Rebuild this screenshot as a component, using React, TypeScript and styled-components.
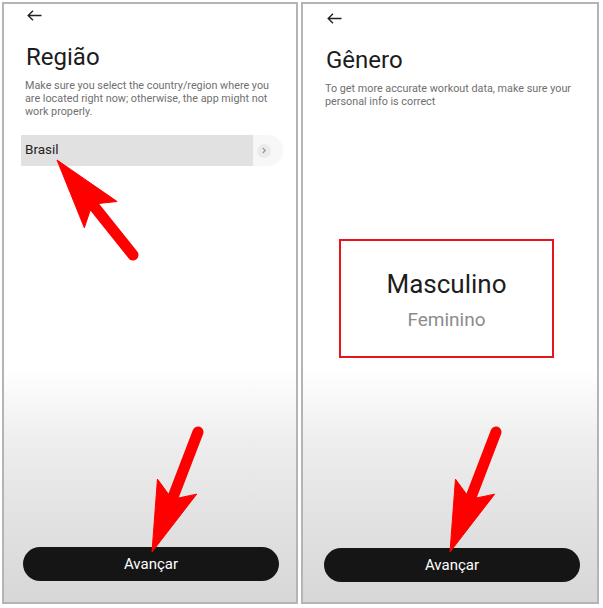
import React from "react";
import styled, { createGlobalStyle } from "styled-components";

const GlobalStyle = createGlobalStyle`
  html, body {
    margin: 0;
    padding: 0;
    background: #fff;
  }
  * {
    box-sizing: border-box;
  }
`;

const Page = styled.div`
  position: relative;
  width: 603px;
  height: 608px;
  display: flex;
  gap: 3px;
  padding: 2px 0 0 2px;
  font-family: Roboto, "Noto Sans", Arial, sans-serif;
`;

const Panel = styled.section<{ $top: number; $w: number; $left: number }>`
  width: ${(p) => p.$w}px;
  height: 602px;
  border: 2px solid #b4b4b4;
  display: flex;
  flex-direction: column;
  padding: ${(p) => p.$top}px 0 0 ${(p) => p.$left}px;
  background: linear-gradient(
    to bottom,
    #ffffff 0%,
    #ffffff 61%,
    #eeeeee 73%,
    #e2e2e2 86%,
    #d7d7d7 100%
  );
`;

const BackRow = styled.div`
  height: 22px;
  display: flex;
  align-items: center;
  padding-left: 4px;
`;

const Title = styled.h1`
  margin: 16px 0 0 3px;
  font-size: 24px;
  line-height: 30px;
  font-weight: 400;
  color: #1c1c1c;
`;

const Description = styled.p`
  margin: 7px 0 0 2px;
  max-width: 250px;
  font-size: 10.8px;
  line-height: 13px;
  color: #707070;
`;

const Row = styled.div`
  margin: 17px 0 0 -2px;
  width: 262px;
  height: 31px;
  display: flex;
  align-items: stretch;
  background: #f7f7f7;
  border-radius: 0 15px 15px 0;
`;

const RowLabel = styled.div`
  width: 232px;
  background: #e1e1e1;
  display: flex;
  align-items: center;
  padding: 0 0 3px 4px;
  font-size: 13.5px;
  color: #242424;
`;

const ChevronDot = styled.div`
  margin-left: 4px;
  align-self: center;
  width: 14px;
  height: 14px;
  border-radius: 50%;
  background: #ebebeb;
  display: flex;
  align-items: center;
  justify-content: center;
`;

const Spacer = styled.div`
  flex: 1;
`;

const Button = styled.button<{ $bottom: number; $shift: number }>`
  height: 34px;
  width: 256px;
  margin: 0 0 ${(p) => p.$bottom}px ${(p) => p.$shift}px;
  border: none;
  border-radius: 17px;
  background: #151515;
  color: #fff;
  font-family: Roboto, Arial, sans-serif;
  font-size: 15px;
  font-weight: 400;
  padding: 0;
`;

const Picker = styled.div`
  margin: 131px 0 0 16px;
  width: 215px;
  height: 119px;
  border: 2.5px solid #e8141b;
  display: flex;
  flex-direction: column;
  align-items: center;
  padding-top: 27px;
`;

const Option = styled.div<{ $selected?: boolean }>`
  font-size: ${(p) => (p.$selected ? 26 : 19)}px;
  line-height: ${(p) => (p.$selected ? 32 : 22)}px;
  margin-top: ${(p) => (p.$selected ? 0 : 9)}px;
  color: ${(p) => (p.$selected ? "#1d1d1d" : "#8c8c8c")};
`;

const Overlay = styled.svg`
  position: absolute;
  inset: 0;
  pointer-events: none;
`;

const BackArrow = () => (
  <svg width="15" height="11" viewBox="0 0 15 11">
    <path
      d="M14.5 5.5H1.2M6 0.8L1.2 5.5L6 10.2"
      fill="none"
      stroke="#222"
      strokeWidth="1.4"
    />
  </svg>
);

const Chevron = () => (
  <svg width="6" height="7" viewBox="0 0 6 7">
    <path d="M1.8 1L4.2 3.5L1.8 6" fill="none" stroke="#9a9a9a" strokeWidth="1.2" />
  </svg>
);

type Pt = [number, number];

const RedArrow = ({ tip, tail }: { tip: Pt; tail: Pt }) => {
  const headLen = 70;
  const notch = 60;
  const headW = 42;
  const shaft = 11;
  const dx = tail[0] - tip[0];
  const dy = tail[1] - tip[1];
  const len = Math.hypot(dx, dy);
  const ux = dx / len;
  const uy = dy / len;
  const nx = -uy;
  const ny = ux;
  const at = (d: number, s: number): string =>
    `${tip[0] + ux * d + nx * s},${tip[1] + uy * d + ny * s}`;
  const head = [
    at(0, 0),
    at(headLen, headW / 2),
    at(notch, shaft / 2),
    at(notch, -shaft / 2),
    at(headLen, -headW / 2),
  ].join(" ");
  return (
    <g fill="#ff0000" stroke="#ff0000">
      <line
        x1={tip[0] + ux * (notch - 3)}
        y1={tip[1] + uy * (notch - 3)}
        x2={tail[0]}
        y2={tail[1]}
        strokeWidth={shaft}
        strokeLinecap="round"
      />
      <polygon points={head} strokeWidth="1" strokeLinejoin="round" />
    </g>
  );
};

export default function App() {
  return (
    <>
      <GlobalStyle />
      <Page>
        <Panel $top={0} $w={296} $left={19}>
          <BackRow>
            <BackArrow />
          </BackRow>
          <Title>Região</Title>
          <Description>
            Make sure you select the country/region where you are located right
            now; otherwise, the app might not work properly.
          </Description>
          <Row>
            <RowLabel>Brasil</RowLabel>
            <ChevronDot>
              <Chevron />
            </ChevronDot>
          </Row>
          <Spacer />
          <Button $bottom={21} $shift={0}>Avançar</Button>
        </Panel>

        <Panel $top={3} $w={298} $left={20}>
          <BackRow>
            <BackArrow />
          </BackRow>
          <Title>Gênero</Title>
          <Description>
            To get more accurate workout data, make sure your personal info is
            correct
          </Description>
          <Picker>
            <Option $selected>Masculino</Option>
            <Option>Feminino</Option>
          </Picker>
          <Spacer />
          <Button $bottom={20} $shift={1}>Avançar</Button>
        </Panel>

        <Overlay width="603" height="608" viewBox="0 0 603 608">
          <RedArrow tip={[57, 160]} tail={[133, 255]} />
          <RedArrow tip={[152, 552]} tail={[198, 432]} />
          <RedArrow tip={[450, 552]} tail={[496, 432]} />
        </Overlay>
      </Page>
    </>
  );
}
